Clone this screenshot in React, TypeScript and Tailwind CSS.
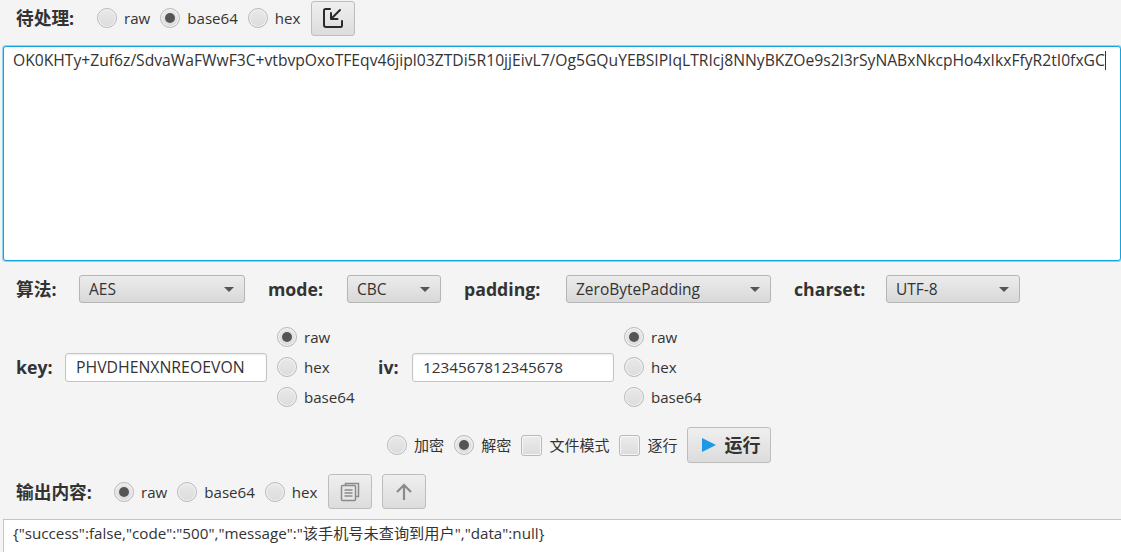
import type { ReactNode } from "react";

const fontCls = "font-['Open_Sans','Noto_Sans_CJK_SC',sans-serif]";

function Radio({ label, checked }: { label: string; checked?: boolean }) {
  return (
    <label className="flex items-center gap-[7px] text-[15.1px] leading-5 text-[#333]">
      <span className="flex h-5 w-5 shrink-0 items-center justify-center rounded-full border border-[#b9b9b9] bg-gradient-to-b from-[#e9e9e9] to-[#dcdcdc] shadow-[inset_0_0_0_1px_#f6f6f6]">
        {checked && <span className="h-2.5 w-2.5 rounded-full bg-[#555]" />}
      </span>
      {label}
    </label>
  );
}

function Check({ label }: { label: string }) {
  return (
    <label className="flex items-center gap-[7px] text-[15px] leading-5 text-[#333]">
      <span className="h-[21px] w-[21px] shrink-0 rounded-[3px] border border-[#b9b9b9] bg-gradient-to-b from-[#ececec] to-[#dcdcdc] shadow-[inset_0_0_0_1px_#f6f6f6]" />
      {label}
    </label>
  );
}

function Label({ children, className = "" }: { children: ReactNode; className?: string }) {
  return <span className={`text-[17.7px] leading-6 font-bold text-[#333] ${className}`}>{children}</span>;
}

function Select({ value, width }: { value: string; width: string }) {
  return (
    <div className={`flex h-[28px] items-center justify-between rounded-[3px] border border-[#b5b5b5] bg-gradient-to-b from-[#ececec] to-[#d8d8d8] pl-[9px] pr-[10px] pt-px text-[15.5px] text-[#333] ${width}`}>
      {value}
      <span className="h-0 w-0 border-x-[5px] border-t-[5px] border-x-transparent border-t-[#555]" />
    </div>
  );
}

function IconButton({ children, className = "" }: { children: ReactNode; className?: string }) {
  return (
    <button className={`flex items-center justify-center rounded-[3px] border border-[#bdbdbd] bg-gradient-to-b from-[#efefef] to-[#dcdcdc] ${className}`}>
      {children}
    </button>
  );
}

function KeyField({ value, className }: { value: string; className: string }) {
  return (
    <input
      readOnly
      value={value}
      className={`h-[29px] w-[202px] rounded-[3px] border border-[#c4c4c4] bg-white px-[10px] text-[#333] shadow-[inset_0_1px_2px_#eee] outline-none ${className}`}
    />
  );
}

function EncodingColumn() {
  return (
    <div className="flex flex-col gap-[10px]">
      <Radio label="raw" checked />
      <Radio label="hex" />
      <Radio label="base64" />
    </div>
  );
}

export default function App() {
  return (
    <div className={`flex h-[552px] w-[1121px] flex-col overflow-hidden bg-[#f4f4f4] ${fontCls}`}>
      {/* input header */}
      <div className="flex h-[36px] items-center pl-4">
        <Label className="w-[81px]">待处理:</Label>
        <div className="flex items-center gap-[10px]">
          <Radio label="raw" />
          <Radio label="base64" checked />
          <Radio label="hex" />
        </div>
        <IconButton className="ml-[11px] h-[35px] w-[44px]">
          <svg width="22" height="22" viewBox="0 0 22 22" fill="none" stroke="#2a2a2a" strokeWidth="2" strokeLinecap="round" strokeLinejoin="round">
            <path d="M8 2H3.5A1.5 1.5 0 0 0 2 3.5V18a2 2 0 0 0 2 2h14.5a1.5 1.5 0 0 0 1.5-1.5V14" />
            <path d="M18 3 9.5 11.5M9 6v6h6.5" />
          </svg>
        </IconButton>
      </div>

      <div className="mt-[10px] ml-[3px] h-[215px] whitespace-nowrap rounded-[3px] border border-[#12a5e2] bg-white pl-[9px] text-[15.66px] leading-[22px] text-[#333] shadow-[0_0_0_1px_#8fd3f0]">
        OK0KHTy+Zuf6z/SdvaWaFWwF3C+vtbvpOxoTFEqv46jipl03ZTDi5R10jjEivL7/Og5GQuYEBSIPIqLTRIcj8NNyBKZOe9s2l3rSyNABxNkcpHo4xIkxFfyR2tI0fxGC
        <span className="inline-block h-[19px] w-px translate-y-[4px] bg-[#333]" />
      </div>

      {/* algorithm */}
      <div className="mt-[14px] flex h-[28px] items-center pl-4">
        <Label className="w-[63px]">算法:</Label>
        <Select value="AES" width="w-[166px]" />
        <Label className="ml-[23px] w-[79px]">mode:</Label>
        <Select value="CBC" width="w-[94px]" />
        <Label className="ml-[23px] w-[102px]">padding:</Label>
        <Select value="ZeroBytePadding" width="w-[205px]" />
        <Label className="ml-[23px] w-[92px]">charset:</Label>
        <Select value="UTF-8" width="w-[134px]" />
      </div>

      {/* key and iv */}
      <div className="mt-[24px] flex h-[80px] items-center pl-4">
        <Label className="w-[49px]">key:</Label>
        <KeyField value="PHVDHENXNREOEVON" className="text-[15.8px]" />
        <div className="ml-[10px] w-[101px]">
          <EncodingColumn />
        </div>
        <Label className="w-[34px]">iv:</Label>
        <KeyField value="1234567812345678" className="text-[15.3px]" />
        <div className="ml-[10px]">
          <EncodingColumn />
        </div>
      </div>

      {/* actions */}
      <div className="mt-[20px] flex h-[36px] items-center pl-[387px]">
        <div className="flex items-center gap-[10px]">
          <Radio label="加密" />
          <Radio label="解密" checked />
          <Check label="文件模式" />
          <Check label="逐行" />
        </div>
        <IconButton className="ml-[10px] h-[36px] w-[84px] gap-2 pl-1 text-[18px] font-bold text-[#333]">
          <svg width="14" height="14" viewBox="0 0 14 14">
            <path d="M0 0 14 7 0 14Z" fill="#1b9ae3" />
          </svg>
          运行
        </IconButton>
      </div>

      {/* output header */}
      <div className="mt-[11px] flex h-[35px] items-center pl-4">
        <Label className="w-[98px]">输出内容:</Label>
        <div className="flex items-center gap-[10px]">
          <Radio label="raw" checked />
          <Radio label="base64" />
          <Radio label="hex" />
        </div>
        <IconButton className="ml-[11px] h-[35px] w-[44px]">
          <svg width="20" height="20" viewBox="0 0 20 20" fill="none" stroke="#8a8a8a" strokeWidth="1.5">
            <path d="M5.5 3.5V1.5h13V14.5h-3" />
            <rect x="1.5" y="3.5" width="14" height="15" rx="1" fill="#e6e6e6" />
            <path d="M4.5 8h8M4.5 11h8M4.5 14h8" />
          </svg>
        </IconButton>
        <IconButton className="ml-[10px] h-[35px] w-[44px]">
          <svg width="20" height="20" viewBox="0 0 20 20" fill="none" stroke="#8a8a8a" strokeWidth="2.2">
            <path d="M10 18V3M3 10l7-7 7 7" />
          </svg>
        </IconButton>
      </div>

      <div className="mt-[10px] ml-[3px] flex-1 whitespace-nowrap border-t border-l border-[#c4c4c4] bg-white pl-[9px] pt-[2px] text-[15.2px] leading-[22px] text-[#333]">
        {'{"success":false,"code":"500","message":"该手机号未查询到用户","data":null}'}
      </div>
    </div>
  );
}
